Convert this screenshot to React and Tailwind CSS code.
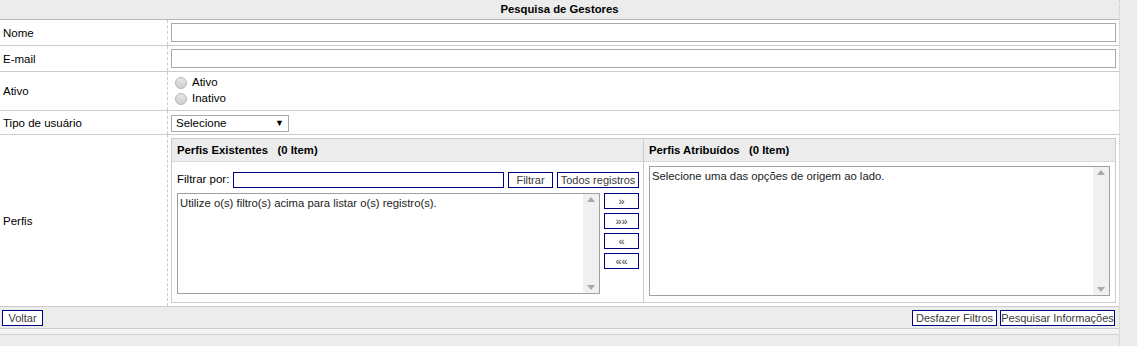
import React from "react";

const font = { fontFamily: '"Liberation Sans", Arial, sans-serif' };

const Btn = ({ children, className = "" }) => (
  <button
    type="button"
    className={`shrink-0 h-[16px] border border-[#000080] bg-white text-[11px] leading-[14px] text-[#3a3a3a] whitespace-nowrap overflow-visible flex items-center justify-center ${className}`}
  >
    {children}
  </button>
);

const Scrollbar = () => (
  <div className="w-[16px] h-full bg-[#f0f0f0] flex flex-col items-center justify-between py-[3px] text-[#a8a8a8]">
    <svg width="8" height="5" viewBox="0 0 8 5">
      <path d="M0 5 L4 0 L8 5 Z" fill="currentColor" />
    </svg>
    <svg width="8" height="5" viewBox="0 0 8 5">
      <path d="M0 0 L8 0 L4 5 Z" fill="currentColor" />
    </svg>
  </div>
);

const Row = ({ label, height, children, center = true }) => (
  <div className={`flex border-b border-[#cccccc] ${height}`}>
    <div className="w-[168px] shrink-0 border-r border-dashed border-[#cccccc] pl-[3px] pt-[2px] flex items-center text-[11.5px] text-black">
      {label}
    </div>
    <div className={`flex-1 pl-[3px] pr-[3px] ${center ? "flex items-center" : ""}`}>{children}</div>
  </div>
);

const Radio = ({ label }) => (
  <label className="flex items-center gap-[5px] h-[16px] pl-[4px]">
    <span className="w-[12px] h-[12px] rounded-full border border-[#b5b5b5] bg-gradient-to-b from-[#e6e6e6] to-[#cfcfcf]" />
    <span className="text-[11.5px] text-black">{label}</span>
  </label>
);

export default function App() {
  return (
    <div className="w-[1137px] h-[346px] bg-[#ececec] flex overflow-hidden" style={font}>
      <div className="w-[1120px] shrink-0 flex flex-col border-r border-dotted border-[#c8c8c8]">
        <div className="h-[20px] bg-[#ececec] border-b border-[#b8b8b8] flex items-center justify-center">
          <span className="text-[11.3px] font-bold text-black">Pesquisa de Gestores</span>
        </div>
        <div className="bg-white">
          <Row label="Nome" height="h-[26px]">
            <input className="w-full h-[19px] border border-[#a9a9a9] outline-none" />
          </Row>
          <Row label="E-mail" height="h-[26px]">
            <input className="w-full h-[19px] border border-[#a9a9a9] outline-none" />
          </Row>
          <Row label="Ativo" height="h-[39px]">
            <div className="flex flex-col">
              <Radio label="Ativo" />
              <Radio label="Inativo" />
            </div>
          </Row>
          <Row label="Tipo de usuário" height="h-[24px]">
            <div className="mt-[2px] w-[118px] h-[17px] border border-[#a9a9a9] flex items-center justify-between px-[4px] text-[11.5px] text-black">
              <span>Selecione</span>
              <span className="text-[9px]">▼</span>
            </div>
          </Row>
          <Row label="Perfis" height="h-[172px]" center={false}>
            <div className="mt-[3px] w-[945px] h-[165px] border border-[#cccccc] flex">
              <div className="w-[472px] shrink-0 border-r border-[#cccccc] flex flex-col">
                <div className="h-[23px] bg-[#ececec] border-b border-dotted border-[#c8c8c8] flex items-center pl-[5px] text-[11.3px] font-bold text-black whitespace-pre">
                  {"Perfis Existentes   (0 Item)"}
                </div>
                <div className="pl-[5px] pt-[9px] flex items-center">
                  <span className="w-[56px] shrink-0 whitespace-nowrap text-[11.5px] text-black">Filtrar por:</span>
                  <input className="w-[271px] shrink-0 h-[16px] border border-[#000080] outline-none" />
                  <Btn className="w-[45px] ml-[4px]">Filtrar</Btn>
                  <Btn className="w-[82px] ml-[4px]">Todos registros</Btn>
                </div>
                <div className="pl-[5px] pt-[5px] flex gap-[4px]">
                  <div className="w-[423px] shrink-0 h-[101px] border border-[#a0a0a0] flex">
                    <div className="flex-1 pl-[2px] pt-[1px] text-[11.3px] text-[#222]">
                      Utilize o(s) filtro(s) acima para listar o(s) registro(s).
                    </div>
                    <Scrollbar />
                  </div>
                  <div className="flex flex-col gap-[4px]">
                    <Btn className="w-[35px] text-[9px]">»</Btn>
                    <Btn className="w-[35px] text-[9px]">»»</Btn>
                    <Btn className="w-[35px] text-[9px]">«</Btn>
                    <Btn className="w-[35px] text-[9px]">««</Btn>
                  </div>
                </div>
              </div>
              <div className="flex-1 flex flex-col">
                <div className="h-[23px] bg-[#ececec] border-b border-dotted border-[#c8c8c8] flex items-center pl-[5px] text-[11.3px] font-bold text-black whitespace-pre">
                  {"Perfis Atribuídos   (0 Item)"}
                </div>
                <div className="pl-[5px] pt-[4px]">
                  <div className="w-[461px] h-[130px] border border-[#a0a0a0] flex">
                    <div className="flex-1 pl-[2px] pt-[1px] text-[11.3px] text-[#222]">
                      Selecione uma das opções de origem ao lado.
                    </div>
                    <Scrollbar />
                  </div>
                </div>
              </div>
            </div>
          </Row>
        </div>
        <div className="h-[22px] bg-[#ececec] border-b border-[#cccccc] flex items-center justify-between px-[2px] pr-[4px]">
          <Btn className="w-[41px]">Voltar</Btn>
          <div className="flex gap-[3px]">
            <Btn className="w-[85px]">Desfazer Filtros</Btn>
            <Btn className="w-[115px]">Pesquisar Informações</Btn>
          </div>
        </div>
        <div className="h-[6px] bg-[#f2f2f2] border-b border-[#d0d0d0]" />
        <div className="flex-1 bg-[#ececec]" />
      </div>
      <div className="flex-1 bg-[#ececec]" />
    </div>
  );
}
